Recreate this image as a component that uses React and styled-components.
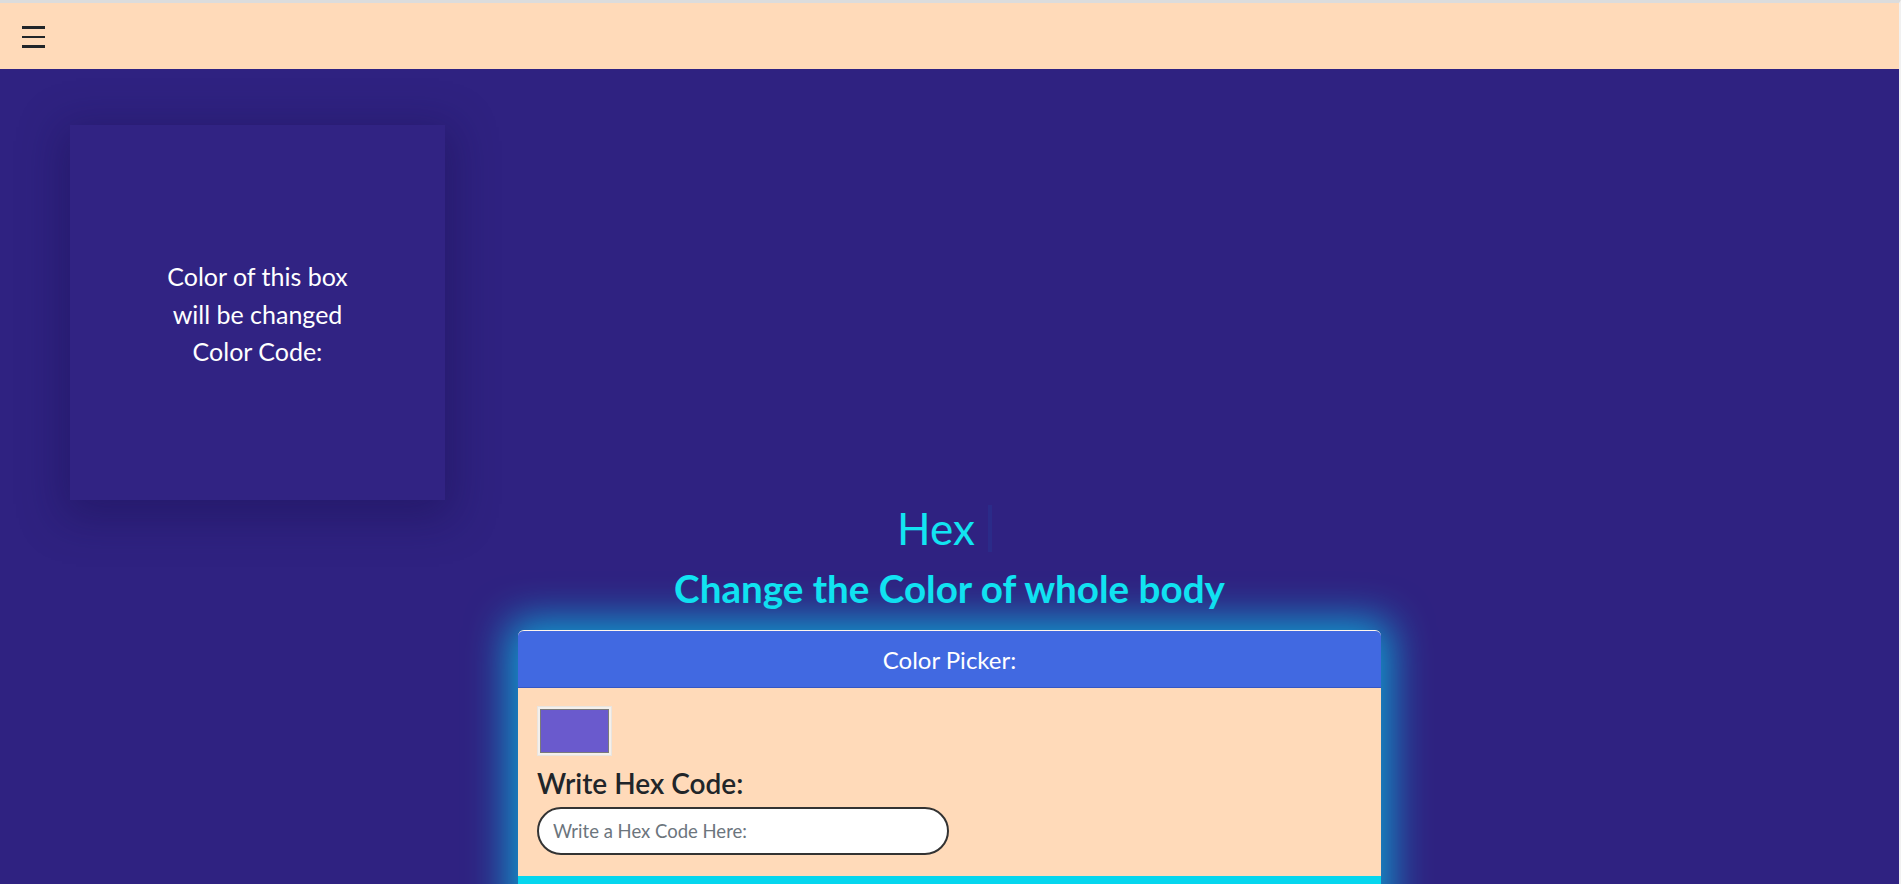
import React from "react";
import styled, { createGlobalStyle } from "styled-components";

const GlobalStyle = createGlobalStyle`
  html, body { margin: 0; padding: 0; background: #dedede; }
  body { font-family: "Lato", "Noto Sans", sans-serif; }
  * { box-sizing: border-box; }
`;

const Page = styled.div`
  height: 884px;
  border-top: 3px solid #dcdcdc;
  border-right: 2px solid #f1f1f1;
  display: flex;
  flex-direction: column;
  overflow: hidden;
  background: #2f2281;
`;

const NavBar = styled.nav`
  height: 66px;
  flex: 0 0 66px;
  background: #ffdab9;
  display: flex;
  align-items: center;
  padding-left: 22px;
`;

const MenuButton = styled.button`
  border: 0;
  background: transparent;
  padding: 0;
  margin-top: 2px;
  width: 23px;
  display: flex;
  flex-direction: column;
  gap: 7px;
  cursor: pointer;
`;

const MenuBar = styled.span`
  display: block;
  height: 2.5px;
  width: 23px;
  background: #212529;
`;

const Main = styled.main`
  flex: 1;
  background: #2f2281;
  display: flex;
  flex-direction: column;
  min-height: 0;
  overflow: hidden;
`;

const BoxRow = styled.div`
  flex-shrink: 0;
  padding: 56px 0 0 70px;
`;

const ColorBox = styled.div`
  width: 375px;
  height: 375px;
  background: #312383;
  box-shadow: 0 10px 40px 8px rgba(20, 12, 70, 0.35);
  display: flex;
  align-items: center;
  justify-content: center;
  text-align: center;
  color: #ffffff;
  font-size: 25px;
  line-height: 37.5px;
  padding-top: 4px;
`;

const Heading = styled.div`
  flex-shrink: 0;
  display: flex;
  flex-direction: column;
  align-items: center;
`;

const Title = styled.h1`
  margin: 5px 10px 0 0;
  font-size: 44px;
  font-weight: 400;
  line-height: 47px;
  height: 47px;
  color: #12e4f2;
  padding-right: 13px;
  border-right: 4px solid #2b2b89;
`;

const Subtitle = styled.h2`
  margin: 14px 0 0 0;
  font-size: 38.6px;
  font-weight: 700;
  line-height: 44px;
  color: #12e4f2;
`;

const Card = styled.section`
  flex-shrink: 0;
  width: 863px;
  margin: 20px auto 0;
  border-radius: 6px 6px 0 0;
  border-top: 1px solid rgba(255, 255, 255, 0.75);
  box-shadow: 0 0 40px 10px rgba(8, 200, 235, 0.75);
  background: #ffdab9;
  overflow: hidden;
  display: flex;
  flex-direction: column;
`;

const CardHeader = styled.header`
  flex: 0 0 57px;
  height: 57px;
  background: #4169e1;
  border-bottom: 1px solid #3457c4;
  display: flex;
  align-items: center;
  justify-content: center;
  color: #ffffff;
  font-size: 24px;
`;

const CardBody = styled.div`
  flex-shrink: 0;
  padding: 18px 19px 21px;
  display: flex;
  flex-direction: column;
  align-items: flex-start;
`;

const Swatch = styled.div`
  width: 75px;
  height: 50px;
  padding: 2px;
  background: #f4f0ec;
  border: 1px solid #e9e4df;
`;

const SwatchColor = styled.div`
  width: 100%;
  height: 100%;
  background: ${(p) => p.color};
  border: 1px solid #7a7a7a;
`;

const FieldLabel = styled.label`
  margin-top: 10px;
  font-size: 28px;
  font-weight: 600;
  line-height: 34px;
  color: #212529;
`;

const HexInput = styled.input`
  margin-top: 7px;
  width: 412px;
  height: 48px;
  border: 2px solid #333333;
  border-radius: 24px;
  background: #ffffff;
  padding: 0 14px;
  font-family: "Lato", "Noto Sans", sans-serif;
  font-size: 18.5px;
  color: #212529;
  outline: none;
  &::placeholder { color: #6c757d; }
`;

const CardFooter = styled.div`
  flex: 0 0 40px;
  background: #06d6ee;
`;

export default function App() {
  return (
    <>
      <GlobalStyle />
      <Page>
        <NavBar>
          <MenuButton aria-label="menu">
            <MenuBar />
            <MenuBar />
            <MenuBar />
          </MenuButton>
        </NavBar>
        <Main>
          <BoxRow>
            <ColorBox>
              <div>
                Color of this box
                <br />
                will be changed
                <br />
                Color Code:
              </div>
            </ColorBox>
          </BoxRow>
          <Heading>
            <Title>Hex</Title>
            <Subtitle>Change the Color of whole body</Subtitle>
          </Heading>
          <Card>
            <CardHeader>Color Picker:</CardHeader>
            <CardBody>
              <Swatch>
                <SwatchColor color="#6a5acd" />
              </Swatch>
              <FieldLabel htmlFor="hex">Write Hex Code:</FieldLabel>
              <HexInput id="hex" placeholder="Write a Hex Code Here:" />
            </CardBody>
            <CardFooter />
          </Card>
        </Main>
      </Page>
    </>
  );
}
